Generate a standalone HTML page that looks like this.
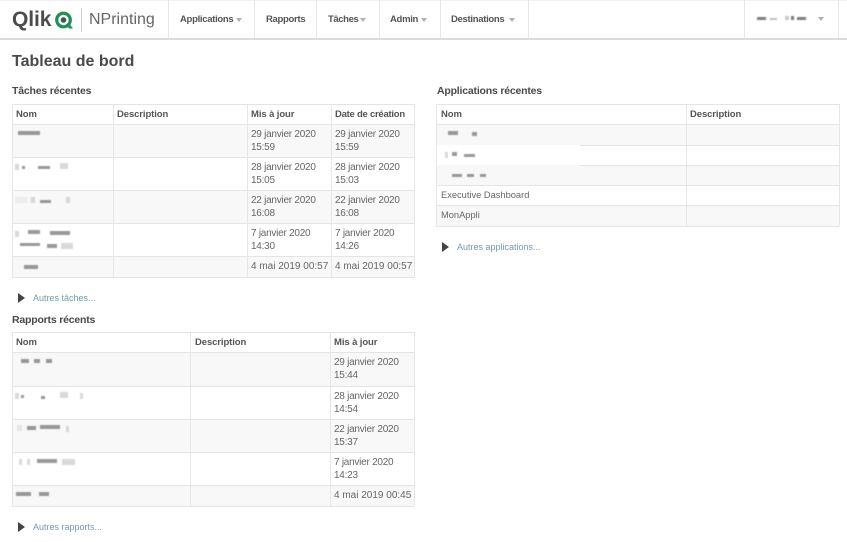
<!DOCTYPE html>
<html lang="fr"><head><meta charset="utf-8"><title>Tableau de bord</title>
<style>
html,body{margin:0;padding:0;background:#fff}
#p{position:relative;width:847px;height:542px;overflow:hidden;background:#fff;font-family:"Liberation Sans",sans-serif;color:#595959;filter:blur(.25px)}
#p div{position:absolute;white-space:nowrap}
.h{height:1px;background:#e4e4e4}
.v{width:1px;background:#e6e6e6}
.n{top:14px;font-size:9.5px;font-weight:bold;color:#555;line-height:12px;letter-spacing:-.3px}
.c{width:0;height:0;border-left:3px solid transparent;border-right:3px solid transparent;border-top:4px solid #b0b0b0}
.s{font-size:10.5px;font-weight:bold;color:#4a4a4a;line-height:14px;letter-spacing:-.2px}
.th{font-size:9.5px;font-weight:bold;color:#555;line-height:12px;letter-spacing:-.1px}
.d{font-size:10px;color:#666;line-height:13px;letter-spacing:-.25px}
.o{letter-spacing:0}
.b{background:#f8f8f8}
.a{font-size:9px;color:#6f9dad;line-height:12px}
.ar{width:0;height:0;border-top:5px solid transparent;border-bottom:5px solid transparent;border-left:7px solid #444}
.m{height:4px;background:#777;opacity:.75;filter:blur(.5px)}
.m2{height:6px;background:#c9c9c9;opacity:.7;filter:blur(.5px)}
.x{font-size:9.3px;color:#666;line-height:12px}
</style></head><body><div id="p">
<!-- nav -->
<div class="h" style="left:0;top:0;width:847px;background:#efefef"></div>
<div style="left:0;top:38px;width:847px;height:2px;background:#dcdcdc"></div>
<div style="left:12px;top:8px;font-size:21px;font-weight:bold;color:#4c4c4c;line-height:24px;letter-spacing:-.1px">Qlik</div>
<svg style="position:absolute;left:54px;top:11px" width="20" height="19" viewBox="0 0 20 19"><circle cx="9.500" cy="9" r="6.800" fill="none" stroke="#1f8f5c" stroke-width="3.200"/><circle cx="9.500" cy="9" r="2.800" fill="#3d5a4c"/><path d="M12 13l3 4.500h4l-3.500-4.500z" fill="#1f8f5c"/></svg>
<div class="v" style="left:81px;top:8px;height:24px;background:#cfcfcf"></div>
<div style="left:89px;top:9px;font-size:16px;color:#666;line-height:22px;letter-spacing:0">NPrinting</div>
<div class="v" style="left:168px;top:0;height:38px"></div>
<div class="v" style="left:254px;top:0;height:38px"></div>
<div class="v" style="left:316px;top:0;height:38px"></div>
<div class="v" style="left:379px;top:0;height:38px"></div>
<div class="v" style="left:440px;top:0;height:38px"></div>
<div class="v" style="left:528px;top:0;height:38px"></div>
<div class="v" style="left:744px;top:0;height:38px"></div>
<div class="v" style="left:838px;top:0;height:38px"></div>
<div class="n" style="left:180px">Applications</div><div class="c" style="left:236px;top:18px"></div>
<div class="n" style="left:266px">Rapports</div>
<div class="n" style="left:328px;letter-spacing:-.4px">Tâches</div><div class="c" style="left:360px;top:18px"></div>
<div class="n" style="left:390px">Admin</div><div class="c" style="left:421px;top:18px"></div>
<div class="n" style="left:451px">Destinations</div><div class="c" style="left:509px;top:18px"></div>
<div class="m" style="left:757px;top:17px;width:9px;height:3px;background:#555"></div>
<div class="m" style="left:770px;top:18px;width:7px;height:2px;background:#aaa"></div>
<div class="m" style="left:785px;top:16px;width:4px;height:4px;background:#bbb"></div>
<div class="m" style="left:791px;top:16px;width:3px;height:4px;background:#555"></div>
<div class="m" style="left:797px;top:17px;width:9px;height:3px;background:#555"></div>
<div class="c" style="left:818px;top:17px"></div>
<!-- title -->
<div style="left:12px;top:51px;font-size:16px;font-weight:bold;color:#4a4a4a;line-height:21px">Tableau de bord</div>
<div class="s" style="left:12px;top:84px">Tâches récentes</div>
<div class="s" style="left:437px;top:84px">Applications récentes</div>
<div class="s" style="left:12px;top:313px">Rapports récents</div>

<!-- table 1 -->
<div class="b" style="left:12px;top:124px;width:402px;height:33px"></div>
<div class="b" style="left:12px;top:190px;width:402px;height:33px"></div>
<div class="b" style="left:12px;top:256px;width:402px;height:21px"></div>
<div class="h" style="left:12px;top:104px;width:402px"></div>
<div class="h" style="left:12px;top:124px;width:402px"></div>
<div class="h" style="left:12px;top:157px;width:402px"></div>
<div class="h" style="left:12px;top:190px;width:402px"></div>
<div class="h" style="left:12px;top:223px;width:402px"></div>
<div class="h" style="left:12px;top:256px;width:402px"></div>
<div class="h" style="left:12px;top:277px;width:402px"></div>
<div class="v" style="left:12px;top:104px;height:173px"></div>
<div class="v" style="left:113px;top:104px;height:173px"></div>
<div class="v" style="left:247px;top:104px;height:173px"></div>
<div class="v" style="left:331px;top:104px;height:173px"></div>
<div class="v" style="left:414px;top:104px;height:173px"></div>
<div class="th" style="left:16px;top:109px">Nom</div>
<div class="th" style="left:117px;top:109px">Description</div>
<div class="th" style="left:251px;top:109px">Mis à jour</div>
<div class="th" style="left:335px;top:109px;letter-spacing:-.25px">Date de création</div>
<div class="d" style="left:251px;top:128px">29 janvier 2020<br>15:59</div>
<div class="d" style="left:335px;top:128px">29 janvier 2020<br>15:59</div>
<div class="d" style="left:251px;top:161px">28 janvier 2020<br>15:05</div>
<div class="d" style="left:335px;top:161px">28 janvier 2020<br>15:03</div>
<div class="d" style="left:251px;top:194px">22 janvier 2020<br>16:08</div>
<div class="d" style="left:335px;top:194px">22 janvier 2020<br>16:08</div>
<div class="d" style="left:251px;top:227px">7 janvier 2020<br>14:30</div>
<div class="d" style="left:335px;top:227px">7 janvier 2020<br>14:26</div>
<div class="d o" style="left:251px;top:260px">4 mai 2019 00:57</div>
<div class="d o" style="left:335px;top:260px">4 mai 2019 00:57</div>
<!-- blurred names t1 -->
<div class="m" style="left:18px;top:131px;width:22px"></div>
<div class="m2" style="left:15px;top:164px;width:4px"></div><div class="m" style="left:22px;top:166px;width:3px;height:3px"></div><div class="m" style="left:38px;top:166px;width:12px;height:3px"></div><div class="m2" style="left:60px;top:163px;width:8px"></div>
<div class="m2" style="left:15px;top:197px;width:12px;background:#e8e8e8"></div><div class="m2" style="left:31px;top:197px;width:4px"></div><div class="m" style="left:40px;top:200px;width:11px;height:3px"></div><div class="m2" style="left:66px;top:197px;width:4px"></div>
<div class="m" style="left:28px;top:230px;width:12px"></div><div class="m" style="left:50px;top:231px;width:20px"></div>
<div class="m2" style="left:15px;top:231px;width:4px"></div>
<div class="m" style="left:20px;top:243px;width:20px;height:3px"></div><div class="m" style="left:47px;top:244px;width:10px"></div><div class="m2" style="left:61px;top:243px;width:12px"></div>
<div class="m" style="left:24px;top:265px;width:14px"></div>
<!-- autres -->
<div class="ar" style="left:18px;top:293px"></div><div class="a" style="left:33px;top:292px">Autres tâches...</div>

<!-- table 2 -->
<div class="b" style="left:12px;top:352px;width:402px;height:34px"></div>
<div class="b" style="left:12px;top:419px;width:402px;height:33px"></div>
<div class="b" style="left:12px;top:485px;width:402px;height:21px"></div>
<div class="h" style="left:12px;top:332px;width:402px"></div>
<div class="h" style="left:12px;top:352px;width:402px"></div>
<div class="h" style="left:12px;top:386px;width:402px"></div>
<div class="h" style="left:12px;top:419px;width:402px"></div>
<div class="h" style="left:12px;top:452px;width:402px"></div>
<div class="h" style="left:12px;top:485px;width:402px"></div>
<div class="h" style="left:12px;top:506px;width:402px"></div>
<div class="v" style="left:12px;top:332px;height:174px"></div>
<div class="v" style="left:190px;top:332px;height:174px"></div>
<div class="v" style="left:330px;top:332px;height:174px"></div>
<div class="v" style="left:414px;top:332px;height:174px"></div>
<div class="th" style="left:16px;top:337px">Nom</div>
<div class="th" style="left:195px;top:337px">Description</div>
<div class="th" style="left:334px;top:337px">Mis à jour</div>
<div class="d" style="left:334px;top:356px">29 janvier 2020<br>15:44</div>
<div class="d" style="left:334px;top:390px">28 janvier 2020<br>14:54</div>
<div class="d" style="left:334px;top:423px">22 janvier 2020<br>15:37</div>
<div class="d" style="left:334px;top:456px">7 janvier 2020<br>14:23</div>
<div class="d o" style="left:334px;top:489px">4 mai 2019 00:45</div>
<div class="m" style="left:21px;top:359px;width:8px"></div><div class="m" style="left:34px;top:359px;width:6px"></div><div class="m" style="left:46px;top:359px;width:6px"></div>
<div class="m2" style="left:15px;top:393px;width:4px"></div><div class="m" style="left:21px;top:395px;width:3px;height:3px"></div><div class="m" style="left:41px;top:396px;width:4px;height:3px"></div><div class="m2" style="left:60px;top:392px;width:8px"></div><div class="m2" style="left:80px;top:393px;width:3px"></div>
<div class="m2" style="left:17px;top:425px;width:5px;background:#ddd"></div><div class="m" style="left:27px;top:426px;width:9px"></div><div class="m" style="left:40px;top:425px;width:20px"></div><div class="m2" style="left:66px;top:426px;width:3px"></div>
<div class="m2" style="left:19px;top:459px;width:3px"></div><div class="m2" style="left:27px;top:459px;width:3px"></div><div class="m" style="left:37px;top:459px;width:20px"></div><div class="m2" style="left:62px;top:459px;width:13px"></div>
<div class="m" style="left:16px;top:492px;width:15px"></div><div class="m" style="left:39px;top:492px;width:10px"></div>
<div class="ar" style="left:18px;top:522px"></div><div class="a" style="left:33px;top:521px">Autres rapports...</div>

<!-- table 3 -->
<div class="b" style="left:436px;top:124px;width:403px;height:21px"></div>
<div class="b" style="left:436px;top:165px;width:403px;height:20px"></div>
<div class="b" style="left:436px;top:205px;width:403px;height:21px"></div>
<div class="h" style="left:436px;top:104px;width:403px"></div>
<div class="h" style="left:436px;top:124px;width:403px"></div>
<div class="h" style="left:580px;top:145px;width:259px"></div>
<div class="h" style="left:580px;top:165px;width:259px"></div>
<div class="h" style="left:436px;top:185px;width:403px"></div>
<div class="h" style="left:436px;top:205px;width:403px"></div>
<div class="h" style="left:436px;top:226px;width:403px"></div>
<div class="v" style="left:436px;top:104px;height:122px"></div>
<div class="v" style="left:686px;top:104px;height:122px"></div>
<div class="v" style="left:839px;top:104px;height:122px"></div>
<div class="th" style="left:441px;top:109px">Nom</div>
<div class="th" style="left:690px;top:109px">Description</div>
<div class="m" style="left:448px;top:131px;width:10px"></div><div class="m" style="left:472px;top:132px;width:5px"></div>
<div class="m2" style="left:445px;top:152px;width:3px"></div><div class="m" style="left:452px;top:152px;width:5px"></div><div class="m" style="left:464px;top:154px;width:11px;height:3px"></div>
<div class="m" style="left:452px;top:174px;width:10px;height:3px"></div><div class="m" style="left:467px;top:174px;width:7px;height:3px"></div><div class="m" style="left:480px;top:174px;width:6px;height:3px"></div>
<div class="x" style="left:441px;top:189px">Executive Dashboard</div>
<div class="x" style="left:441px;top:209px">MonAppli</div>
<div class="ar" style="left:442px;top:242px"></div><div class="a" style="left:457px;top:241px">Autres applications...</div>
</div></body></html>
